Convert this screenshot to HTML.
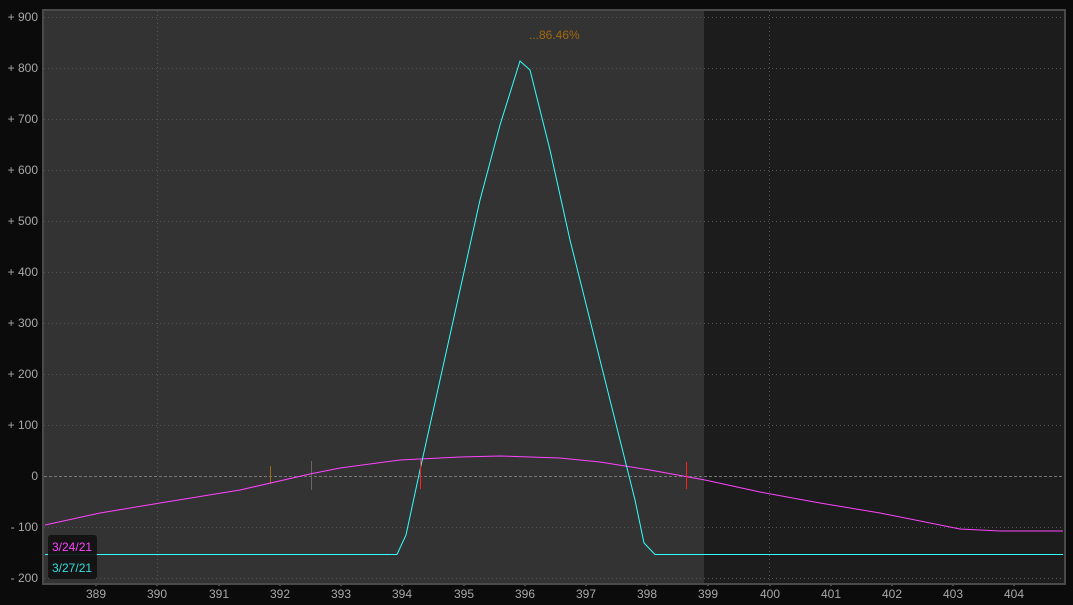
<!DOCTYPE html>
<html><head><style>
html,body{margin:0;padding:0;background:#0b0b0b;}
svg{display:block}
text{font-family:"Liberation Sans",sans-serif;font-size:12px;fill:#a8a8a8}
</style></head><body>
<svg width="1073" height="605" xmlns="http://www.w3.org/2000/svg">
<rect width="1073" height="605" fill="#0b0b0b"/>
<rect x="42" y="9" width="1024" height="576" fill="#4a4a4a"/>
<rect x="44" y="11" width="660" height="572" fill="#333333"/>
<rect x="704" y="11" width="360" height="572" fill="#1c1c1c"/>
<g stroke="#555" stroke-width="1" stroke-dasharray="1,3">
<line x1="44" x2="1064" y1="17.5" y2="17.5"/><line x1="44" x2="1064" y1="68.5" y2="68.5"/>
<line x1="44" x2="1064" y1="119.5" y2="119.5"/><line x1="44" x2="1064" y1="170.5" y2="170.5"/>
<line x1="44" x2="1064" y1="221.5" y2="221.5"/><line x1="44" x2="1064" y1="272.5" y2="272.5"/>
<line x1="44" x2="1064" y1="323.5" y2="323.5"/><line x1="44" x2="1064" y1="374.5" y2="374.5"/>
<line x1="44" x2="1064" y1="425.5" y2="425.5"/><line x1="44" x2="1064" y1="527.5" y2="527.5"/>
<line x1="44" x2="1064" y1="578.5" y2="578.5"/>
<line x1="157.5" x2="157.5" y1="11" y2="583"/>
<line x1="769.5" x2="769.5" y1="11" y2="583"/>
</g>
<line x1="44" x2="1064" y1="476.5" y2="476.5" stroke="#777" stroke-dasharray="3,2"/>
<g fill="#4a4a4a">
<rect x="95" y="583" width="2" height="3"/><rect x="156" y="583" width="2" height="3"/><rect x="218" y="583" width="2" height="3"/>
<rect x="279" y="583" width="2" height="3"/><rect x="340" y="583" width="2" height="3"/><rect x="401" y="583" width="2" height="3"/>
<rect x="463" y="583" width="2" height="3"/><rect x="524" y="583" width="2" height="3"/><rect x="585" y="583" width="2" height="3"/>
<rect x="646" y="583" width="2" height="3"/><rect x="707" y="583" width="2" height="3"/><rect x="769" y="583" width="2" height="3"/>
<rect x="830" y="583" width="2" height="3"/><rect x="891" y="583" width="2" height="3"/><rect x="952" y="583" width="2" height="3"/><rect x="1013" y="583" width="2" height="3"/>
</g>
<line x1="270.5" x2="270.5" y1="466" y2="484" stroke="#a06a10"/>
<line x1="311.5" x2="311.5" y1="461" y2="490" stroke="#666"/>
<polyline fill="none" stroke="#ff44ff" stroke-width="1" points="45,525 100,513 160,503 240,490 310,474 340,468 400,460 460,457 500,456 560,458 600,462 650,470 705,480 760,492 820,503 880,513 960,529 1000,531 1063,531"/>
<polyline fill="none" stroke="#33ffff" stroke-width="1" points="45,554.5 397,554.5 406,535 420,470 440,380 460,290 480,200 500,125 520,61 530,70 550,150 570,240 600,360 620,440 635,500 644,543 655,554.5 1063,554.5"/>
<line x1="420.5" x2="420.5" y1="460" y2="489" stroke="#ff2020"/>
<line x1="686.5" x2="686.5" y1="462" y2="489" stroke="#ff2020"/>
<text x="529" y="39" style="fill:#a06a10">...86.46%</text>
<rect x="48" y="535" width="49" height="44" rx="3" fill="#111" opacity="0.9"/>
<text x="52" y="551" style="fill:#ff44ff">3/24/21</text>
<text x="52" y="572" style="fill:#33dddd">3/27/21</text>
<g text-anchor="end">
<text x="38" y="21">+ 900</text><text x="38" y="72">+ 800</text><text x="38" y="123">+ 700</text>
<text x="38" y="174">+ 600</text><text x="38" y="225">+ 500</text><text x="38" y="276">+ 400</text>
<text x="38" y="327">+ 300</text><text x="38" y="378">+ 200</text><text x="38" y="429">+ 100</text>
<text x="38" y="480">0</text><text x="38" y="531">- 100</text><text x="38" y="582">- 200</text>
</g>
<g text-anchor="middle">
<text x="96" y="598">389</text><text x="157" y="598">390</text><text x="219" y="598">391</text>
<text x="280" y="598">392</text><text x="341" y="598">393</text><text x="402" y="598">394</text>
<text x="464" y="598">395</text><text x="525" y="598">396</text><text x="586" y="598">397</text>
<text x="647" y="598">398</text><text x="708" y="598">399</text><text x="770" y="598">400</text>
<text x="831" y="598">401</text><text x="892" y="598">402</text><text x="953" y="598">403</text><text x="1014" y="598">404</text>
</g>
</svg>
</body></html>
